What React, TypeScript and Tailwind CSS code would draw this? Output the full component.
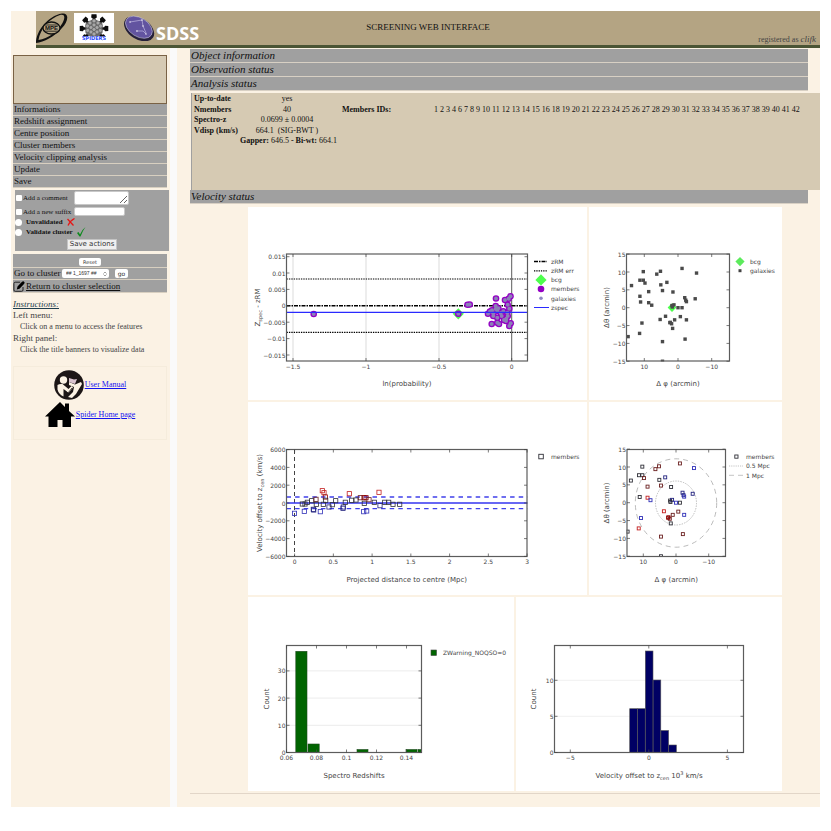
import React from 'react';
import { clsx } from 'clsx';
import { ChevronsUpDown } from 'lucide-react';

type Point = [number, number];
type ColorPoint = [number, number, string];

interface Tick {
  at: number;
  label: string;
}

interface ChartProps {
  width: number;
  height: number;
  // left, top, right, bottom of the plot frame
  frame: [number, number, number, number];
  xTicks: Tick[];
  yTicks: Tick[];
  xTitle: React.ReactNode;
  yTitle: React.ReactNode;
  yTitleX: number;
  label: string;
  legend?: React.ReactNode;
  children: React.ReactNode;
}

const INK = '#444444';
const FRAME = '#5c5c5c';
const NAVY = '#22227f';
const BLUE = '#3030b8';
const MAROON = '#6b2020';
const RED = '#c42020';
const DARK = '#303038';

const menuItems = [
  'Informations',
  'Redshift assignment',
  'Centre position',
  'Cluster members',
  'Velocity clipping analysis',
  'Update',
  'Save',
];

const memberIds = [
  1, 2, 3, 4, 6, 7, 8, 9, 10, 11, 12, 13, 14, 15, 16, 18, 19, 20, 21, 22, 23, 24, 25, 26, 27, 28,
  29, 30, 31, 32, 33, 34, 35, 36, 37, 38, 39, 40, 41, 42,
];

const probabilityPoints: Point[] = [
  [65.7, 107], [210.3, 106.7], [219.5, 97.7], [221.7, 97.5], [248, 91.5], [257, 93],
  [262.5, 89.3], [260.7, 91.7], [242, 104.5], [240, 106.7], [244, 103.3], [247.7, 99],
  [247.7, 102], [245.3, 106.3], [245.3, 109], [249.3, 103.7], [250.3, 101.3], [249.3, 110.7],
  [252.7, 106], [255.3, 104.3], [253.7, 109], [256, 113], [258, 114], [259.7, 109],
  [259.7, 97.7], [261.3, 101.7], [259.3, 105.7], [243.7, 117], [249.3, 115.7], [251, 117],
  [261.3, 119], [262.7, 116.3], [258.3, 111.7],
];

const skyMembers: ColorPoint[] = [
  [10.3, 10.1, DARK], [5.2, 10.2, MAROON], [6.3, 9.4, MAROON], [-1.2, 11, MAROON],
  [-5.5, 9.7, BLUE], [11.3, 7.7, DARK], [10.3, 7.7, DARK], [9.8, 6.9, MAROON],
  [13.8, 6.2, DARK], [5.1, 6.4, DARK], [3.3, 7.1, NAVY], [4.6, 4.8, MAROON],
  [1.5, 4.4, DARK], [8.7, 4.5, MAROON], [-2, 2.8, NAVY], [-2.3, 2.1, NAVY],
  [-2.5, 1.7, BLUE], [-5.1, 2.5, NAVY], [11.1, 1.6, DARK], [8.7, 1.4, RED],
  [7.8, 0.7, BLUE], [1.8, 0.6, DARK], [1.2, 0.8, NAVY], [1.7, 0.2, DARK],
  [0, 0, BLUE], [-1.2, 0, DARK], [3.7, -2.4, RED], [-0.7, -2.5, MAROON],
  [-2.5, -3.4, BLUE], [1, -3.4, MAROON], [2.4, -4.2, '#900000'], [1.9, -4.5, MAROON],
  [2.3, -4.1, '#900000'], [1.6, -5.8, DARK], [10.7, -4.3, BLUE], [11.4, -7.2, RED],
  [-2.1, -8.8, MAROON], [4.6, -9.5, MAROON], [14.8, -8.1, DARK], [4.6, -15, DARK],
];

const skyExtra: Point[] = [[11.3, 3.2], [5.3, -3.3]];

const velocityPoints: ColorPoint[] = [
  [46.5, 111.3, BLUE], [74.3, 88.7, RED], [76, 90.7, RED], [77.3, 95, '#900000'],
  [101.3, 91.7, RED], [131, 90.3, RED], [54.3, 102, DARK], [57, 102, DARK],
  [59.3, 100.3, DARK], [56.3, 109.3, BLUE], [63.7, 98.7, DARK], [68, 97.3, MAROON],
  [68.3, 102.3, DARK], [65.3, 107.3, NAVY], [65.7, 108, NAVY], [72.3, 109.7, BLUE],
  [75.3, 102.3, DARK], [77.7, 98.3, DARK], [81, 105, NAVY], [84.3, 102.7, DARK],
  [87.7, 98.7, DARK], [95, 106.3, NAVY], [95.3, 105, NAVY], [97.3, 100.3, DARK],
  [103.7, 98.3, DARK], [108, 98, DARK], [112.3, 95.7, MAROON], [116, 95.7, '#900000'],
  [118, 95.7, '#900000'], [116.3, 101.3, DARK], [115.7, 109.7, BLUE], [118.7, 109, BLUE],
  [121, 97.7, MAROON], [126.3, 100.3, DARK], [132, 103.7, NAVY], [136.7, 100.3, DARK],
  [140.7, 100.3, DARK], [145, 102.3, DARK], [151.7, 102.3, DARK],
];

const Chart: React.FC<ChartProps> = ({
  width, height, frame, xTicks, yTicks, xTitle, yTitle, yTitleX, label, legend, children,
}) => {
  const [x0, y0, x1, y1] = frame;
  const cy = (y0 + y1) / 2;
  return (
    <svg
      viewBox={`0 0 ${width} ${height}`}
      className="block h-auto w-full bg-white font-['DejaVu_Sans',sans-serif]"
      role="img"
      aria-label={label}
    >
      {children}
      <rect x={x0} y={y0} width={x1 - x0} height={y1 - y0} fill="none" stroke={FRAME} strokeWidth={1.2} />
      {xTicks.map((t) => (
        <g key={t.label}>
          <path d={`M${t.at} ${y1}v-3M${t.at} ${y0}v3`} stroke={INK} strokeWidth={0.7} />
          <text x={t.at} y={y1 + 7.5} fontSize={6} fill={INK} textAnchor="middle">
            {t.label}
          </text>
        </g>
      ))}
      {yTicks.map((t) => (
        <g key={t.label}>
          <path d={`M${x0} ${t.at}h3M${x1} ${t.at}h-3`} stroke={INK} strokeWidth={0.7} />
          <text x={x0 - 1} y={t.at + 2.5} fontSize={6} fill={INK} textAnchor="end">
            {t.label}
          </text>
        </g>
      ))}
      <text x={(x0 + x1) / 2} y={y1 + 25} fontSize={7} fill={INK} textAnchor="middle">
        {xTitle}
      </text>
      <text
        transform={`translate(${yTitleX} ${cy}) rotate(-90)`}
        fontSize={7}
        fill={INK}
        textAnchor="middle"
      >
        {yTitle}
      </text>
      <g fontSize={6} fill={INK}>{legend}</g>
    </svg>
  );
};

const ProbabilityChart = () => (
  <Chart
    width={339}
    height={193}
    frame={[38.5, 47, 279.5, 154]}
    label="Redshift offset against probability"
    xTicks={[
      { at: 45, label: '−1.5' },
      { at: 118, label: '−1' },
      { at: 191, label: '−0.5' },
      { at: 263.7, label: '0' },
    ]}
    yTicks={[
      { at: 49.7, label: '0.015' },
      { at: 66, label: '0.01' },
      { at: 82.4, label: '0.005' },
      { at: 98.9, label: '0' },
      { at: 115.2, label: '−0.005' },
      { at: 131.6, label: '−0.01' },
      { at: 148, label: '−0.015' },
    ]}
    xTitle="ln(probability)"
    yTitle={<>Z<tspan fontSize={5} dy={2}>spec</tspan><tspan dy={-2}> - zRM</tspan></>}
    yTitleX={12}
    legend={
      <>
        <path d="M286 54.5h13" stroke="#000" strokeWidth={1.6} strokeDasharray="4 1 1.5 1" />
        <path d="M286 63.8h13" stroke="#000" strokeWidth={1.3} strokeDasharray="1.3 1" />
        <path d="M293 67.3l5.6 5.6l-5.6 5.6l-5.6-5.6z" fill="#4dff4d" />
        <circle cx={293} cy={82} r={3.3} fill="#9400c4" />
        <circle cx={293} cy={91.3} r={1.8} fill="#9088c4" />
        <path d="M286 100.5h15" stroke="#2a2aff" />
        <text x={303} y={57}>zRM</text>
        <text x={303} y={66}>zRM err</text>
        <text x={303} y={75}>bcg</text>
        <text x={303} y={84}>members</text>
        <text x={303} y={94}>galaxies</text>
        <text x={303} y={103}>zspec</text>
      </>
    }
  >
    <path d="M45 47v107M118 47v107M191 47v107" stroke="#e6e6e6" strokeWidth={1.4} />
    <path d="M263.7 47v107" stroke={FRAME} />
    <path d="M38.5 98.8h241" stroke="#000" strokeWidth={1.6} strokeDasharray="4 1 1.5 1" />
    <path d="M38.5 72h241M38.5 125.4h241" stroke="#000" strokeWidth={1.2} strokeDasharray="1.4 1" />
    <path d="M210.3 101.2l5.6 5.6l-5.6 5.6l-5.6-5.6z" fill="#4dff4d" />
    {probabilityPoints.map(([x, y]) => (
      <circle key={`${x}-${y}`} cx={x} cy={y} r={3.3} fill="#9400c4" />
    ))}
    {probabilityPoints.map(([x, y]) => (
      <circle key={`${x}-${y}`} cx={x} cy={y} r={2} fill="#8c80b8" />
    ))}
    <path d="M38.5 105.4h241" stroke="#2a2aff" strokeWidth={1.2} />
  </Chart>
);

const skyYTicks: Tick[] = [15, 10, 5, 0, -5, -10, -15].map((v) => ({
  at: 100.7 - v * 3.57,
  label: String(v).replace('-', '−'),
}));

const skyX = (v: number) => 89 - v * 3.37;
const skyY = (v: number) => 100.7 - v * 3.57;
const memberX = (v: number) => 87 - v * 3.27;

const SkyChart = () => (
  <Chart
    width={193}
    height={193}
    frame={[37.5, 47, 140.5, 154]}
    label="Galaxies on the sky"
    xTicks={[10, 0, -10].map((v) => ({ at: skyX(v), label: String(v).replace('-', '−') }))}
    yTicks={skyYTicks}
    xTitle="Δ φ (arcmin)"
    yTitle="Δθ (arcmin)"
    yTitleX={20}
    legend={
      <>
        <path d="M151 50l4.6 4.6l-4.6 4.6l-4.6-4.6z" fill="#5ceb5c" />
        <rect x={149.5} y={62.2} width={3} height={3} fill={INK} />
        <text x={161} y={57}>bcg</text>
        <text x={161} y={66}>galaxies</text>
      </>
    }
  >
    <path d="M83 96.2l4.4 4.4l-4.4 4.4l-4.4-4.4z" fill="#4dff4d" />
    {[...skyMembers, ...skyExtra].map(([x, y], i) => (
      <rect key={i} x={skyX(x) - 1.7} y={skyY(y) - 1.7} width={3.4} height={3.4} fill="#4a4a4a" />
    ))}
    {/* covers markers cut by the frame */}
    <path d="M34 126h3v9h-3zM68 154.5h10v3h-10z" fill="#fff" />
  </Chart>
);

const VelocityChart = () => (
  <Chart
    width={339}
    height={193}
    frame={[38.5, 47.5, 279, 154.5]}
    label="Velocity offset against distance"
    xTicks={['0', '0.5', '1', '1.5', '2', '2.5', '3'].map((l) => ({
      at: 46.6 + Number(l) * 77.5,
      label: l,
    }))}
    yTicks={[6000, 4000, 2000, 0, -2000, -4000, -6000].map((v) => ({
      at: 101 - v * 0.0089,
      label: String(v).replace('-', '−'),
    }))}
    xTitle="Projected distance to centre (Mpc)"
    yTitle={<>Velocity offset to z<tspan fontSize={5} dy={2}>cen</tspan><tspan dy={-2}> (km/s)</tspan></>}
    yTitleX={14}
    legend={
      <>
        <rect x={290.8} y={52.3} width={4.5} height={4.5} fill="none" stroke={DARK} strokeWidth={0.9} />
        <text x={303} y={57}>members</text>
      </>
    }
  >
    <path d="M46.5 48v106" stroke="#444" strokeDasharray="4 3" />
    <path d="M38.5 95h241M38.5 106.6h241" stroke="#4040ea" strokeWidth={1.4} strokeDasharray="4.5 4.1" />
    <path d="M38.5 101h241" stroke="#3535f0" strokeWidth={1.4} />
    {velocityPoints.map(([x, y, color], i) => (
      <rect key={i} x={x - 2.1} y={y - 2.1} width={4.2} height={4.2} fill="none" stroke={color} strokeWidth={0.8} />
    ))}
  </Chart>
);

const MemberSkyChart = () => (
  <Chart
    width={193}
    height={193}
    frame={[38, 47.5, 136.5, 154.5]}
    label="Members on the sky"
    xTicks={[10, 0, -10].map((v) => ({ at: memberX(v), label: String(v).replace('-', '−') }))}
    yTicks={skyYTicks}
    xTitle="Δ φ (arcmin)"
    yTitle="Δθ (arcmin)"
    yTitleX={20}
    legend={
      <>
        <rect x={145.8} y={53} width={3.2} height={3.2} fill="none" stroke={DARK} strokeWidth={0.9} />
        <path d="M140 64h14" stroke="#aaa" strokeWidth={0.7} strokeDasharray="1.2 1" />
        <path d="M140 73.3h14" stroke="#aaa" strokeWidth={0.7} strokeDasharray="5 4" />
        <text x={157} y={57}>members</text>
        <text x={157} y={66}>0.5 Mpc</text>
        <text x={157} y={76}>1 Mpc</text>
      </>
    }
  >
    <ellipse cx={87} cy={101} rx={20.5} ry={22} fill="none" stroke="#aaa" strokeWidth={0.8} strokeDasharray="1.4 1.2" />
    <ellipse cx={87} cy={101} rx={40.7} ry={44.2} fill="none" stroke="#aaa" strokeWidth={0.8} strokeDasharray="5 4" />
    {skyMembers.map(([x, y, color], i) => (
      <rect key={i} x={memberX(x) - 1.5} y={skyY(y) - 1.5} width={3} height={3} fill="none" stroke={color} strokeWidth={0.9} />
    ))}
    {/* covers markers cut by the frame */}
    <path d="M34 126h3.5v8h-3.5zM68 155h10v3h-10z" fill="#fff" />
  </Chart>
);

const RedshiftHistogram = () => (
  <Chart
    width={266}
    height={194}
    frame={[38.5, 48.5, 173.5, 155.5]}
    label="Spectroscopic redshift histogram"
    xTicks={['0.06', '0.08', '0.1', '0.12', '0.14'].map((l, i) => ({ at: 38.5 + i * 30, label: l }))}
    yTicks={['0', '10', '20', '30'].map((l, i) => ({ at: 155.5 - i * 27.2, label: l }))}
    xTitle="Spectro Redshifts"
    yTitle="Count"
    yTitleX={21}
    legend={
      <>
        <rect x={183} y={53} width={5.5} height={5.5} fill="#006400" stroke={INK} strokeWidth={0.6} />
        <text x={195} y={58}>ZWarning_NOQSO=0</text>
      </>
    }
  >
    <path d="M39 73.9h134M39 101.1h134M39 128.3h134" stroke="#ececec" />
    <g fill="#006400" stroke="#1f4a1f" strokeWidth={0.6}>
      <rect x={47.8} y={54.3} width={11.2} height={101.2} />
      <rect x={60} y={147} width={11.2} height={8.5} />
      <rect x={109} y={152.5} width={11} height={3} />
      <rect x={158} y={152.5} width={11} height={3} />
      <rect x={170} y={152.5} width={3.5} height={3} />
    </g>
  </Chart>
);

const velocityBars = [111.7, 111.7, 54, 83, 133.5, 148];

const VelocityHistogram = () => (
  <Chart
    width={266}
    height={194}
    frame={[38.5, 48.5, 227.5, 155.5]}
    label="Velocity offset histogram"
    xTicks={[
      { at: 54.3, label: '−5' },
      { at: 132.8, label: '0' },
      { at: 211.4, label: '5' },
    ]}
    yTicks={[
      { at: 155.5, label: '0' },
      { at: 119.3, label: '5' },
      { at: 83.3, label: '10' },
    ]}
    xTitle={
      <>
        Velocity offset to z<tspan fontSize={5} dy={2}>cen</tspan><tspan dy={-2}> 10</tspan>
        <tspan fontSize={5} dy={-3}>3</tspan><tspan dy={3}> km/s</tspan>
      </>
    }
    yTitle="Count"
    yTitleX={20}
  >
    <path d="M39 119.3h188M39 83.3h188" stroke="#f0f0f0" />
    {velocityBars.map((top, i) => (
      <rect key={i} x={113.7 + i * 7.8} y={top} width={7.7} height={155.5 - top} fill="#000064" stroke="#555" strokeWidth={0.6} />
    ))}
  </Chart>
);

const MpeLogo = () => (
  <svg width="32" height="30" viewBox="0 0 32 30" aria-hidden="true">
    <path
      d="M0 30C0 18 12 3 26 .5C34-.5 32 9 26 15C18 24 8 29 0 30ZM2.500 27C12 26 22 18 26.500 10C30 3 28 1 24 2C14 5 4 16 2.500 27Z"
      fill="#111"
      fillRule="evenodd"
    />
    <ellipse cx="15.500" cy="15" rx="8.500" ry="6" fill="#b4a483" stroke="#111" strokeWidth="1.300" />
    <path d="M8 12h15M8 18.200h15" stroke="#111" strokeWidth="0.800" />
    <text x="15.500" y="17.300" textAnchor="middle" fontSize="6" fontWeight="bold" fill="#111" className="font-['Liberation_Sans',sans-serif]">
      MPE
    </text>
  </svg>
);

const SpidersLogo = () => (
  <svg width="40" height="30" viewBox="0 0 40 30" className="bg-white" aria-hidden="true">
    <g fill="#0c0c0c">
      {[0, 45, 90, 135, 225, 270, 315].map((angle) => (
        <path key={angle} d="M17.500 1.200h5l.3 3.200l-1.500 1v3h-2.600v-3l-1.500-1z" transform={`rotate(${angle} 20 15.500)`} />
      ))}
    </g>
    <path d="M20 5.500l8.500 5v9.500l-5 4h-7l-5-4v-9.500z" fill="#6c6c6c" />
    <g fill="#a8a8a8" stroke="#555" strokeWidth="0.500">
      {[[20, 8], [16, 10], [24, 10], [20, 12], [13.5, 13], [26.5, 13], [17, 14.5], [23, 14.5], [20, 16.5], [13.8, 17.5], [26.2, 17.5], [17, 19], [23, 19], [20, 21]].map(([x, y]) => (
        <circle key={`${x}-${y}`} cx={x} cy={y} r="2" />
      ))}
    </g>
    <path d="M7 23.500h26v4h-26z" fill="#fff" />
    <text x="20" y="27" textAnchor="middle" fontSize="5" fontWeight="bold" fill="#2b4bff" className="font-['DejaVu_Sans',sans-serif]">
      SPIDERS
    </text>
  </svg>
);

const SdssLogo = () => (
  <svg width="32" height="26" viewBox="0 0 32 26" aria-hidden="true">
    <g transform="rotate(32 16 13)">
      <ellipse cx="16.500" cy="13.600" rx="16.500" ry="10.500" fill="#25203a" />
      <ellipse cx="15.500" cy="12.400" rx="14.700" ry="9.300" fill="#6254a0" stroke="#d8d4ea" strokeWidth="0.500" />
    </g>
    <path d="M7 7l6-1l6-1M19 5l1 6l3 7M13 16l7 0l3 3" fill="none" stroke="#cfc8ee" strokeWidth="0.600" />
    <g fill="#fff">
      <circle cx="7" cy="7" r="0.700" />
      <circle cx="19" cy="5" r="0.700" />
      <circle cx="20" cy="11" r="0.700" />
      <circle cx="14" cy="16" r="0.700" />
      <circle cx="23" cy="19" r="0.700" />
    </g>
  </svg>
);

const ManualIcon = () => (
  <svg width="30" height="30" viewBox="0 0 30 30" aria-hidden="true">
    <circle cx="15" cy="15" r="14.800" fill="#1c1616" />
    <g fill="#fbf2e4">
      <circle cx="9.500" cy="10" r="3.700" />
      <path d="M3.500 15q2-1.500 5-1l6 5l3-3l1.500 1.500l-4.500 5.500l-5-4v7.500q-5-2.500-6-7z" />
      <path d="M15 12l6 2.500l6-2.500l1 2l-6 10l-4 4l-4-1l5-5l1-5l-5-2z" />
    </g>
    <path d="M15 8l5 1.500l3-.5l-2 5l-6-2z" fill="#d9c3cf" />
    <path d="M10 20l4 3l4-5" fill="none" stroke="#1c1616" strokeWidth="0.800" />
  </svg>
);

const HomeIcon = () => (
  <svg width="30" height="25" viewBox="0 0 30 25" aria-hidden="true">
    <path d="M15 0l5 5v-3.500h4v7.500l6 5.500h-4v10.500h-8.500v-7h-5v7h-9v-10.500h-3.500z" fill="#000" />
  </svg>
);

const EditIcon = () => (
  <svg width="12" height="11" viewBox="0 0 12 11" aria-hidden="true">
    <path d="M10 6v3q0 1.300-1.300 1.300h-6.500q-1.300 0-1.300-1.300v-6.500q0-1.300 1.300-1.300h5" fill="none" stroke="#222" strokeWidth="1" />
    <path d="M3.800 8.500l.7-3l4.500-4.800q1.500-.8 2.300.2q.8 1-.3 2l-4.500 4.800z" fill="#000" />
  </svg>
);

const CrossIcon = () => (
  <svg width="8" height="8" viewBox="0 0 8 8" aria-hidden="true">
    <path d="M.5 1l6 6.500M7.500.5q-4 2-6.500 7" fill="none" stroke="#e51616" strokeWidth="1.300" />
  </svg>
);

const TickIcon = () => (
  <svg width="9" height="10" viewBox="0 0 9 10" aria-hidden="true">
    <path d="M0 6l1.500-1l1.500 2.500q2-5 5.500-7.500q-3 4-5 9.500h-1z" fill="#0b8a1c" />
  </svg>
);

const SideRow: React.FC<{ children: React.ReactNode; className?: string }> = ({ children, className }) => (
  <div className={clsx('border-b border-[#d8cfc0] bg-[#a0a0a0]', className)}>{children}</div>
);

const Banner: React.FC<{ title: string }> = ({ title }) => (
  <button
    type="button"
    className="mr-3 block h-[14px] border-b border-[#d8d0c4] bg-[#a0a0a0] pl-px text-left text-[11px] leading-[13px] text-[#111] italic"
  >
    {title}
  </button>
);

const boxField = 'rounded-xs border border-[#c8c8c8] bg-white';

const Sidebar = () => (
  <aside className="w-[159px] shrink-0 pt-[7px] pr-[3px] pl-[2px]">
    <div className="h-[49px] border border-[#7a6245] bg-[#d6cab3]" />
    <nav className="flex flex-col">
      {menuItems.map((item) => (
        <button
          key={item}
          type="button"
          className="h-3 border-b border-[#d8cfc0] bg-[#a0a0a0] pl-px text-left text-[9px] leading-[11px]"
        >
          {item}
        </button>
      ))}
    </nav>

    <form className="mt-[2px] -mr-[2px] ml-[2px] flex h-[61px] flex-col bg-[#a0a0a0] pt-[1px] text-[7px] leading-[10px]" onSubmit={(e) => e.preventDefault()}>
      <div className="flex h-[14px] items-center">
        <input id="add-comment" type="checkbox" className="mx-px size-[6px] appearance-none rounded-[1px] bg-white" />
        <label htmlFor="add-comment" className="w-[51px] whitespace-nowrap">Add a comment</label>
        <textarea aria-label="Comment" className={clsx(boxField, 'h-[14px] w-[55px]')} />
      </div>
      <div className="mt-px flex h-[11px] items-center">
        <input id="add-suffix" type="checkbox" className="mx-px size-[6px] appearance-none rounded-[1px] bg-white" />
        <label htmlFor="add-suffix" className="w-[51px] whitespace-nowrap">Add a new suffix</label>
        <input aria-label="Suffix" className={clsx(boxField, 'h-[9px] w-[51px]')} />
      </div>
      <div className="flex h-[10px] items-center font-bold">
        <input id="unvalidated" type="radio" name="validation" className="mr-1 size-[7px] appearance-none rounded-full bg-white" />
        <label htmlFor="unvalidated" className="flex items-center gap-1">Unvalidated <CrossIcon /></label>
      </div>
      <div className="flex h-[10px] items-center font-bold">
        <input id="validated" type="radio" name="validation" className="mr-1 size-[7px] appearance-none rounded-full bg-white" />
        <label htmlFor="validated" className="flex items-center gap-1">Validate cluster <TickIcon /></label>
      </div>
      <button type="submit" className="mx-auto mt-[2px] h-[11px] border border-[#c4c4c4] bg-[#efefef] px-[2px] font-['DejaVu_Sans',sans-serif] text-[7px] leading-[9px] text-[#333]">
        Save actions
      </button>
    </form>

    <SideRow className="mt-[3px] flex h-[14px] items-end justify-center pb-px">
      <button type="button" className="h-2 rounded-xs bg-white px-1 font-['DejaVu_Sans',sans-serif] text-[5px] leading-[8px] text-[#333]">
        Reset
      </button>
    </SideRow>
    <SideRow className="flex h-[12px] items-center pl-px text-[9px]">
      <label htmlFor="cluster" className="w-[48px]">Go to cluster</label>
      <div className="relative">
        <select id="cluster" className="block h-[9px] w-[47px] appearance-none rounded-xs bg-white pl-1 font-['Liberation_Sans',sans-serif] text-[5px] leading-[9px] text-[#333]">
          <option>## 1_1697 ##</option>
        </select>
        <ChevronsUpDown size={6} className="pointer-events-none absolute top-[2px] right-px text-[#444]" />
      </div>
      <button type="button" className="ml-[6px] h-[9px] w-[13px] rounded-xs bg-white font-['DejaVu_Sans',sans-serif] text-[6px] leading-[8px] text-[#333]">
        go
      </button>
    </SideRow>
    <SideRow className="flex h-[13px] items-center">
      <a href="#selection" className="flex items-center gap-px text-[9px] leading-[12px] text-[#111] underline">
        <EditIcon />
        Return to cluster selection
      </a>
    </SideRow>

    <section className="mt-[5px] text-[9px] leading-[11px] text-[#444]">
      <h2 className="leading-[12px] text-[#1f3f4f] italic underline">Instructions:</h2>
      <p>Left menu:</p>
      <p className="mb-px pl-[7px] text-[8px]">Click on a menu to access the features</p>
      <p>Right panel:</p>
      <p className="pl-[7px] text-[8px]">Click the title banners to visualize data</p>
    </section>

    <div className="mt-[11px] flex h-[74px] flex-col items-center gap-[2px] border border-[#f5ecdc] pt-[3px] text-[8px] text-[#1414f0]">
      <a href="#manual" className="flex items-center gap-px underline"><ManualIcon /> User Manual</a>
      <a href="#home" className="flex items-center gap-px underline"><HomeIcon /> Spider Home page</a>
    </div>
  </aside>
);

const AnalysisTable = () => (
  <div className="mt-[2px] ml-px h-[97px] border-l border-[#a0a0a0] bg-[#d6cab3] pl-[2px]">
    <table className="w-full table-fixed text-[8px] leading-[11px]">
      <colgroup>
        <col className="w-[46px]" />
        <col className="w-[94px]" />
        <col className="w-[8px]" />
        <col className="w-[92px]" />
        <col />
      </colgroup>
      <tbody>
        <tr>
          <th className="text-left whitespace-nowrap">Up-to-date</th>
          <td className="text-center">yes</td>
        </tr>
        <tr>
          <th className="text-left">Nmembers</th>
          <td className="text-center">40</td>
          <td />
          <th className="text-left">Members IDs:</th>
          <td className="whitespace-nowrap">{memberIds.join(' ')}</td>
        </tr>
        <tr>
          <th className="text-left leading-[10px]">Spectro-z</th>
          <td className="text-center leading-[10px]">0.0699 ± 0.0004</td>
        </tr>
        <tr>
          <th className="text-left leading-[11px] whitespace-nowrap">Vdisp (km/s)</th>
          <td className="text-center leading-[11px]">664.1 &nbsp;(SIG-BWT )</td>
        </tr>
        <tr>
          <td />
          <td className="text-center leading-[10px] whitespace-nowrap">
            <b>Gapper:</b> 646.5 <b>- Bi-wt:</b> 664.1
          </td>
        </tr>
      </tbody>
    </table>
  </div>
);

const App: React.FC = () => (
  <div className="min-h-screen bg-white p-[11px] font-['Liberation_Serif',serif] text-[#111]">
    <div className="bg-[#fbf2e4]">
      <header className="ml-[25px] grid h-[37px] grid-cols-[1fr_auto_1fr] items-center border-b-[3px] border-[#4b5535] bg-[#b4a483]">
        <div className="flex items-center">
          <MpeLogo />
          <div className="ml-[6px]"><SpidersLogo /></div>
          <div className="ml-[9px]"><SdssLogo /></div>
          <span className="ml-px pt-[9px] font-['Open_Sans',sans-serif] text-[18px] leading-[18px] font-bold text-white">SDSS</span>
        </div>
        <h1 className="text-[9px]">SCREENING WEB INTERFACE</h1>
        <p className="self-end pr-1 text-right text-[8px] leading-[10px] text-[#444]">
          registered as <i className="text-[9px]">clifk</i>
        </p>
      </header>

      <div className="flex">
        <Sidebar />
        <div className="w-[7px] shrink-0 bg-[#fafafa]" />
        <main className="min-w-0 flex-1 pt-px pb-[13px] pl-[13px]">
          <div className="flex flex-col">
            <Banner title="Object information" />
            <Banner title="Observation status" />
            <Banner title="Analysis status" />
          </div>
          <AnalysisTable />
          <div className="flex flex-col">
            <Banner title="Velocity status" />
          </div>

          <div className="mt-[3px] mr-[38px] ml-[58px] flex flex-col gap-[2px]">
            <div className="flex items-start gap-[2px]">
              <div className="flex-[339]"><ProbabilityChart /></div>
              <div className="flex-[193]"><SkyChart /></div>
            </div>
            <div className="flex items-start gap-[2px]">
              <div className="flex-[339]"><VelocityChart /></div>
              <div className="flex-[193]"><MemberSkyChart /></div>
            </div>
            <div className="flex items-start gap-[2px]">
              <div className="flex-1"><RedshiftHistogram /></div>
              <div className="flex-1"><VelocityHistogram /></div>
            </div>
          </div>
          <hr className="mt-[2px] border-[#e2d6c8]" />
        </main>
      </div>
    </div>
  </div>
);

export default App;
